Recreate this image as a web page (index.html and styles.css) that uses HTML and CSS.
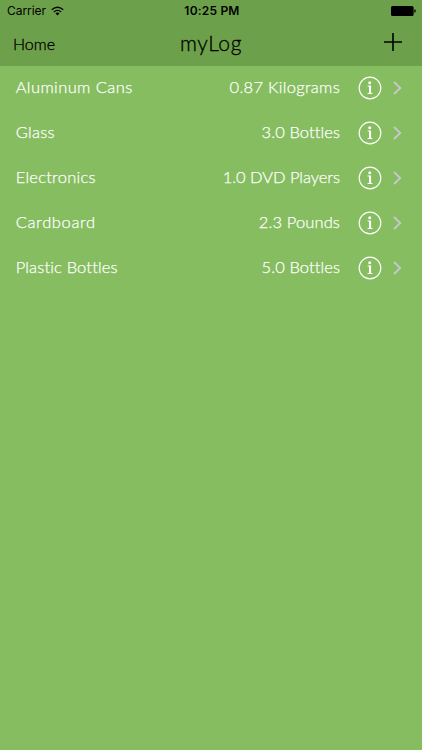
FILE: index.html
```html
<!DOCTYPE html>
<html lang="en">
<head>
<meta charset="utf-8">
<title>myLog</title>
<link rel="stylesheet" href="styles.css">
</head>
<body>
<svg class="defs" aria-hidden="true">
  <symbol id="info" viewBox="0 0 24 24">
    <circle cx="12" cy="12" r="10.8" fill="none" stroke="currentColor" stroke-width="1.2"/>
    <circle cx="11.7" cy="6.8" r="1.5" fill="currentColor"/>
    <path d="M9.6 9.6h3.5v7.4h1.3v1H9.6v-1H11v-6.4H9.6z" fill="currentColor"/>
  </symbol>
  <symbol id="chevron" viewBox="0 0 10 14">
    <path d="M1 1 7.2 7 1 13" fill="none" stroke="currentColor" stroke-width="1.9"/>
  </symbol>
</svg>
<header class="header">
  <div class="status">
    <div class="carrier"><span class="carrier-name">Carrier</span>
      <svg class="wifi" viewBox="0 0 14 10"><g fill="none" stroke="#000" stroke-width="1.5"><path d="M.8 3.6Q7-1.7 13.2 3.6"/><path d="M3 6Q7 2.7 11 6"/></g><path d="M4.8 7.4Q7 5.7 9.2 7.4L7 9.8z"/></svg>
    </div>
    <time class="clock">10:25 PM</time>
    <svg class="battery" viewBox="0 0 25 10"><rect width="22.6" height="10" rx="1.6"/><path d="M23.3 3.2q1.5.3 1.5 1.8t-1.5 1.8z"/></svg>
  </div>
  <nav class="nav">
    <span class="home">Home</span>
    <h1 class="title">myLog</h1>
    <svg class="plus" viewBox="0 0 18 18"><path d="M9 0v18M0 9h18" stroke="#000" stroke-width="1.6"/></svg>
  </nav>
</header>
<main class="list">
  <div class="row aluminum"><span class="name">Aluminum Cans</span><span class="value">0.87 Kilograms</span><svg class="info"><use href="#info"/></svg><svg class="chevron"><use href="#chevron"/></svg></div>
  <div class="row glass"><span class="name">Glass</span><span class="value">3.0 Bottles</span><svg class="info"><use href="#info"/></svg><svg class="chevron"><use href="#chevron"/></svg></div>
  <div class="row electronics"><span class="name">Electronics</span><span class="value">1.0 DVD Players</span><svg class="info"><use href="#info"/></svg><svg class="chevron"><use href="#chevron"/></svg></div>
  <div class="row cardboard"><span class="name">Cardboard</span><span class="value">2.3 Pounds</span><svg class="info"><use href="#info"/></svg><svg class="chevron"><use href="#chevron"/></svg></div>
  <div class="row plastic"><span class="name">Plastic Bottles</span><span class="value">5.0 Bottles</span><svg class="info"><use href="#info"/></svg><svg class="chevron"><use href="#chevron"/></svg></div>
</main>
</body>
</html>
```
FILE: styles.css
```css
* { box-sizing: border-box; }
body {
  margin: 0;
  min-height: 750px;
  background: #86bd60;
  color: #fff;
  font-family: Lato, "Liberation Sans", sans-serif;
}
.defs { position: absolute; width: 0; height: 0; }
.header { height: 66px; background: #6da04a; color: #000; }
.status {
  height: 22px;
  display: grid;
  grid-template-columns: 1fr auto 1fr;
  align-items: center;
  padding: 0 6px 0 7px;
  font: 12px/22px Inter, sans-serif;
}
.carrier { display: flex; align-items: center; gap: 5px; }
.carrier-name { letter-spacing: -.05px; }
.wifi { width: 13px; height: 10px; }
.clock { font-weight: 600; letter-spacing: .2px; margin-left: 1px; }
.battery { width: 25px; height: 10px; justify-self: end; }
.nav {
  height: 44px;
  display: grid;
  grid-template-columns: 1fr auto 1fr;
  align-items: center;
  padding: 0 20px 0 13px;
  -webkit-text-stroke: .3px currentColor;
}
.home { font-size: 16px; font-weight: 300; letter-spacing: 0; padding-bottom: 2px; }
.title {
  margin: 0 0 4px 7px;
  font-size: 21px;
  font-weight: 300;
  letter-spacing: .6px;
}
.plus { width: 18px; height: 18px; justify-self: end; margin-top: -4px; }
.row {
  height: 44.8px;
  display: flex;
  align-items: center;
  padding: 0 19.5px 0 15.7px;
  font-size: 16.5px;
  font-weight: 300;
  -webkit-text-stroke: .25px currentColor;
}
.name, .value { padding-bottom: 2px; }
.value { margin-left: auto; }
.aluminum .name { letter-spacing: .41px; }
.aluminum .value { letter-spacing: .29px; }
.glass .name { letter-spacing: .29px; }
.glass .value { letter-spacing: .09px; }
.electronics .name { letter-spacing: .26px; }
.electronics .value { letter-spacing: -.04px; }
.cardboard .name { letter-spacing: .64px; }
.cardboard .value { letter-spacing: .13px; }
.plastic .name { letter-spacing: .16px; }
.plastic .value { letter-spacing: .09px; }
.info { width: 24px; height: 24px; margin-left: 17.5px; }
.chevron { width: 10px; height: 14px; margin-left: 11px; color: #c7c7cc; }
```
